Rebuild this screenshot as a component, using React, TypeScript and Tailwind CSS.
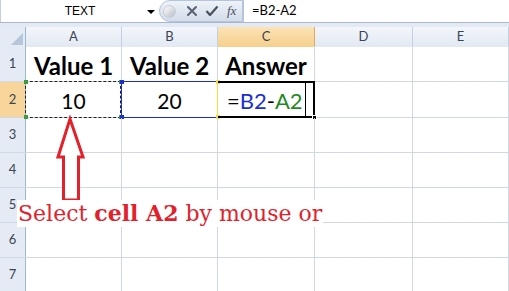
const cols = ['A', 'B', 'C', 'D', 'E'];

const Cross = () => (
  <svg width="12" height="12" viewBox="0 0 12 12">
    <path d="M2 2 L10 10 M10 2 L2 10" stroke="#5a6270" strokeWidth="2" strokeLinecap="round" />
  </svg>
);

const Check = () => (
  <svg width="14" height="12" viewBox="0 0 14 12">
    <path d="M1.5 6 L5 10 L12.5 1.5" stroke="#4a5260" strokeWidth="2.2" fill="none" strokeLinejoin="round" />
  </svg>
);

const FormulaBar = () => (
  <div className="flex h-[23px] border-b border-[#a9b8cc] bg-white">
    <div className="relative flex w-[159px] items-center border-l border-[#c5cfdc]">
      <span className="flex-1 text-center text-[12px] text-black [font-family:'Liberation_Sans',sans-serif]">TEXT</span>
      <span className="absolute left-[146px] top-[10px] h-0 w-0 border-x-[4px] border-t-[4px] border-x-transparent border-t-black" />
    </div>
    <div className="flex w-[84px] items-center rounded-l-full border border-[#b5c4d8] bg-gradient-to-b from-[#eef2f8] to-[#d3ddeb] pl-[3px]">
      <span className="h-[13px] w-[13px] rounded-full border border-[#c7ccd3] bg-gradient-to-br from-[#ffffff] to-[#b8bec7]" />
      <span className="ml-[10px] flex"><Cross /></span>
      <span className="ml-[7px] flex"><Check /></span>
      <span className="ml-[8px] text-[13px] italic text-[#4a5260] [font-family:'Liberation_Serif',serif]">fx</span>
    </div>
    <div className="flex flex-1 items-center border-l border-[#b5c4d8] pl-[8px] text-[13px] text-black [font-family:'Lato',sans-serif]">
      =B2-A2
    </div>
  </div>
);

const HeaderRow = () => (
  <div className="grid h-[19px] grid-cols-[26px_96px_96px_97px_98px_1fr] border-b border-[#9eb6ce]">
    <div className="relative border-r border-[#9eb6ce] bg-[#e4ebf5]">
      <span className="absolute bottom-[2px] right-[2px] h-0 w-0 border-b-[12px] border-l-[12px] border-b-[#b6c6da] border-l-transparent" />
    </div>
    {cols.map((c) => (
      <div
        key={c}
        className={
          c === 'C'
            ? 'flex items-center justify-center border-r border-[#e1a95e] bg-gradient-to-b from-[#fbe3b5] to-[#f6cf8c] text-[13px] text-[#3b4452]'
            : 'flex items-center justify-center border-r border-[#c1d0e2] bg-gradient-to-b from-[#f3f6fb] to-[#e2e9f3] text-[13px] text-[#3b4452]'
        }
      >
        {c}
      </div>
    ))}
  </div>
);

const RowHead = ({ n, active }: { n: number; active?: boolean }) => (
  <div
    className={
      active
        ? 'flex items-center justify-center border-r border-[#9eb6ce] bg-[#f8d69b] text-[13px] text-[#3b4452]'
        : 'flex items-center justify-center border-r border-[#9eb6ce] bg-[#e4ebf5] text-[13px] text-[#3b4452]'
    }
  >
    {n}
  </div>
);

const Cell = ({ children, className }: { children?: React.ReactNode; className?: string }) => (
  <div className={`relative border-r border-[#d0d7e5] ${className || ''}`}>{children}</div>
);

const Corner = ({ color, pos }: { color: string; pos: string }) => (
  <span className={`absolute h-[4px] w-[4px] ${color} ${pos}`} />
);

const App = () => {
  const rowBase = 'grid grid-cols-[26px_96px_96px_97px_98px_1fr] border-b border-[#d0d7e5]';
  return (
    <div className="relative h-[291px] w-[509px] overflow-hidden bg-white [font-family:'Lato',sans-serif]">
      <FormulaBar />
      <div className="h-[4px] bg-[#e3eaf4]" />
      <HeaderRow />

      {/* row 1 */}
      <div className={`${rowBase} h-[36px]`}>
        <RowHead n={1} />
        {['Value 1', 'Value 2', 'Answer'].map((t) => (
          <Cell key={t} className="flex items-end justify-center pb-[1px]">
            <span className="text-[24px] font-bold leading-[28px] text-black">{t}</span>
          </Cell>
        ))}
        <Cell />
        <Cell />
      </div>

      {/* row 2 */}
      <div className={`${rowBase} h-[36px]`}>
        <RowHead n={2} active />
        <Cell className="flex items-end justify-center pb-[4px]">
          <span className="text-[21px] leading-[24px] text-black">10</span>
          <div className="absolute -left-[1px] -top-[1px] -bottom-[1px] right-0 border border-dashed border-[#222]" />
          <Corner color="bg-[#3c9b3c]" pos="-left-[2px] -top-[2px]" />
          <Corner color="bg-[#3c9b3c]" pos="-left-[2px] -bottom-[2px]" />
          <Corner color="bg-[#3c9b3c]" pos="-right-[2px] -top-[2px]" />
          <Corner color="bg-[#3c9b3c]" pos="-right-[2px] -bottom-[2px]" />
        </Cell>
        <Cell className="flex items-end justify-center pb-[4px]">
          <span className="text-[21px] leading-[24px] text-black">20</span>
          <div className="absolute -left-[1px] -top-[1px] -bottom-[1px] -right-[1px] border border-[#1a2fd0]" />
          <Corner color="bg-[#1a2fd0]" pos="-left-[2px] -top-[2px]" />
          <Corner color="bg-[#1a2fd0]" pos="-left-[2px] -bottom-[2px]" />
          <Corner color="bg-[#f0e040]" pos="-right-[3px] -top-[2px]" />
          <Corner color="bg-[#f0e040]" pos="-right-[3px] -bottom-[2px]" />
        </Cell>
        <Cell className="flex items-end pb-[4px] pl-[9px]">
          <span className="text-[22px] leading-[24px]">
            <span className="text-black">=</span>
            <span className="text-[#1a2fd0]">B2</span>
            <span className="text-black">-</span>
            <span className="text-[#1f8a1f]">A2</span>
          </span>
          <div className="absolute -top-[1px] -bottom-[1px] -right-[1px] left-0 border-2 border-l-0 border-black" />
          <div className="absolute -top-[1px] -bottom-[1px] -left-[1px] w-[1px] bg-[#f0e040]" />
          <div className="absolute right-[8px] top-[1px] bottom-[1px] w-[1px] bg-black" />
          <span className="absolute -bottom-[3px] -right-[3px] h-[5px] w-[5px] border border-white bg-black" />
        </Cell>
        <Cell />
        <Cell />
      </div>

      {[3, 4, 5, 6, 7].map((n) => (
        <div key={n} className={`${rowBase} h-[35px]`}>
          <RowHead n={n} />
          <Cell />
          <Cell />
          <Cell />
          <Cell />
          <Cell />
        </div>
      ))}

      {/* red arrow pointing at A2 */}
      <svg className="absolute left-[52px] top-[114px]" width="40" height="92" viewBox="0 0 40 92">
        <path
          d="M18 5 L31 43 L26.5 43 L26.5 86 L11.5 86 L11.5 43 L6 43 Z"
          fill="white"
          stroke="#e3212b"
          strokeWidth="3"
          strokeLinejoin="miter"
        />
      </svg>

      <div className="absolute left-[17px] top-[200px] bg-white px-[1px] text-[22px] leading-[27px] text-[#e3212b] [font-family:'DejaVu_Serif',serif]">
        Select <span className="font-bold">cell A2</span> by mouse or
      </div>
    </div>
  );
};

export default App;
